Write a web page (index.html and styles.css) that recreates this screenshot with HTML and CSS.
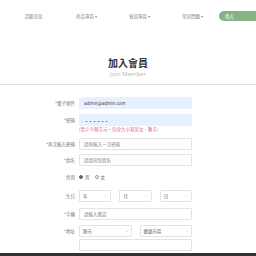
FILE: index.html
```html
<!DOCTYPE html>
<html lang="zh-Hant">
<head>
  <meta charset="UTF-8" />
  <meta name="viewport" content="width=device-width, initial-scale=1.0"/>
  <title>加入會員</title>
  <link rel="stylesheet" href="styles.css">
</head>
<body>

  <!-- 導覽列 -->
  <div class="header">
    <ul class="nav">
      <li>活動訊息</li>
      <li>商品專區 <span class="caret">▾</span></li>
      <li>會員專區 <span class="caret">▾</span></li>
      <li>常見問題 <span class="caret">▾</span></li>
    </ul>
    <button class="btn-login">登入</button>
  </div>

  <!-- 標題 -->
  <div class="title">
    <h1>加入會員</h1>
    <p>Join Member</p>
  </div>

  <!-- 表單 -->
  <form class="form">
    <div class="row row-email">
      <label>*電子郵件</label>
      <input type="text" class="filled" value="admin@admin.com" />
    </div>
    <div class="row row-pwd">
      <label>*密碼</label>
      <input type="password" class="filled" value="123456" />
    </div>
    <div class="hint">(至少 8 個字元，包含大小寫英文、數字)</div>
    <div class="row row-confirm">
      <label>*再次輸入密碼</label>
      <input type="password" placeholder="請再輸入一次密碼" />
    </div>
    <div class="row row-name">
      <label>*姓名</label>
      <input type="text" placeholder="請填寫您姓名" />
    </div>
    <div class="row row-gender">
      <label>性別</label>
      <div class="radios">
        <span class="radio on"></span><span>男</span>
        <span class="radio"></span><span>女</span>
      </div>
    </div>
    <div class="row row-birth">
      <label>生日</label>
      <div class="selects three">
        <div class="select">年<span class="arrow">⌄</span></div>
        <div class="select">月<span class="arrow">⌄</span></div>
        <div class="select">日<span class="arrow">⌄</span></div>
      </div>
    </div>
    <div class="row row-phone">
      <label>*手機</label>
      <input type="text" placeholder="請輸入電話" />
    </div>
    <div class="row row-addr">
      <label>*地址</label>
      <div class="selects two">
        <div class="select">縣市<span class="arrow">⌄</span></div>
        <div class="select">鄉鎮市區<span class="arrow">⌄</span></div>
      </div>
    </div>
    <div class="row row-street">
      <label></label>
      <input type="text" />
    </div>
  </form>

  <div class="footer"></div>

</body>
</html>
```

FILE: styles.css
```css
body {
  margin: 0;
  padding: 0;
  background: #fff;
  font-family: 'Noto Sans CJK TC', 'Noto Sans', sans-serif;
  color: #666;
  overflow: hidden;
}

/* 導覽列 */
.header {
  height: 32px;
  display: flex;
  align-items: center;
  overflow: hidden;
}

.nav {
  list-style: none;
  margin: 0;
  padding: 0 0 0 7px;
  display: flex;
}

.nav li {
  width: 53px;
  text-align: center;
  font-size: 4.5px;
  color: #888;
}

.caret {
  font-size: 4px;
}

.btn-login {
  margin-left: auto;
  margin-right: -6px;
  width: 45px;
  height: 10px;
  padding: 0 0 0 6px;
  border: none;
  border-radius: 5px;
  background: #86b486;
  color: #fff;
  font-family: inherit;
  font-size: 4.5px;
  text-align: left;
}

/* 標題 */
.title {
  text-align: center;
  padding-top: 24px;
  padding-bottom: 6px;
  border-bottom: 1px solid #e2e2e2;
}

.title h1 {
  margin: 0;
  font-size: 10px;
  line-height: 14px;
  color: #333;
}

.title p {
  margin: 0;
  font-size: 6px;
  line-height: 8px;
  color: #b5b5b5;
  font-family: 'Open Sans', sans-serif;
}

/* 表單 */
.form {
  margin: 0;
  padding-top: 12px;
}

.row {
  display: grid;
  grid-template-columns: 75px 113px;
  grid-template-rows: 12px;
  column-gap: 4px;
  align-items: center;
  height: 12px;
}

.row label {
  text-align: right;
  font-size: 4.5px;
  line-height: 6px;
  color: #777;
}

input {
  box-sizing: border-box;
  width: 100%;
  height: 12px;
  margin: 0;
  padding: 0 4px;
  border: 1px solid #e3e3e3;
  border-radius: 1px;
  font-family: inherit;
  font-size: 4.5px;
  color: #444;
  outline: none;
}

input::placeholder {
  color: #888;
}

input.filled {
  background: #e8f0fe;
  border-color: #e8f0fe;
}

input[type="password"].filled {
  color: #333;
  font-size: 5px;
  letter-spacing: -1px;
}

.row-pwd { margin-top: 5px; }
.row-confirm { margin-top: 6px; }
.row-name { margin-top: 4px; }
.row-gender { margin-top: 5px; }
.row-birth { margin-top: 7px; }
.row-phone { margin-top: 6px; }
.row-addr { margin-top: 5px; }
.row-street { margin-top: 2px; }

.hint {
  margin-left: 79px;
  height: 6px;
  line-height: 6px;
  font-size: 4.5px;
  color: #e0607a;
  overflow: hidden;
}

.radios {
  display: flex;
  align-items: center;
  gap: 2px;
  height: 12px;
  font-size: 4.5px;
  color: #777;
}

.radio {
  box-sizing: border-box;
  width: 4px;
  height: 4px;
  border: 0.6px solid #999;
  border-radius: 50%;
}

.radio.on {
  background: #666;
  border-color: #666;
}

.radios span:nth-child(2) {
  margin-right: 3px;
}

.selects {
  display: grid;
  gap: 8px;
}

.selects.three {
  grid-template-columns: 1fr 1fr 1fr;
}

.selects.two {
  grid-template-columns: 1fr 1fr;
}

.select {
  box-sizing: border-box;
  height: 12px;
  padding: 0 3px;
  border: 1px solid #e3e3e3;
  border-radius: 1px;
  display: flex;
  align-items: center;
  justify-content: space-between;
  font-size: 4.5px;
  color: #666;
}

.arrow {
  font-size: 4px;
  color: #aaa;
  line-height: 4px;
  margin-top: -2px;
}

.footer {
  margin-top: 2px;
  height: 40px;
  background: #333;
}
```
